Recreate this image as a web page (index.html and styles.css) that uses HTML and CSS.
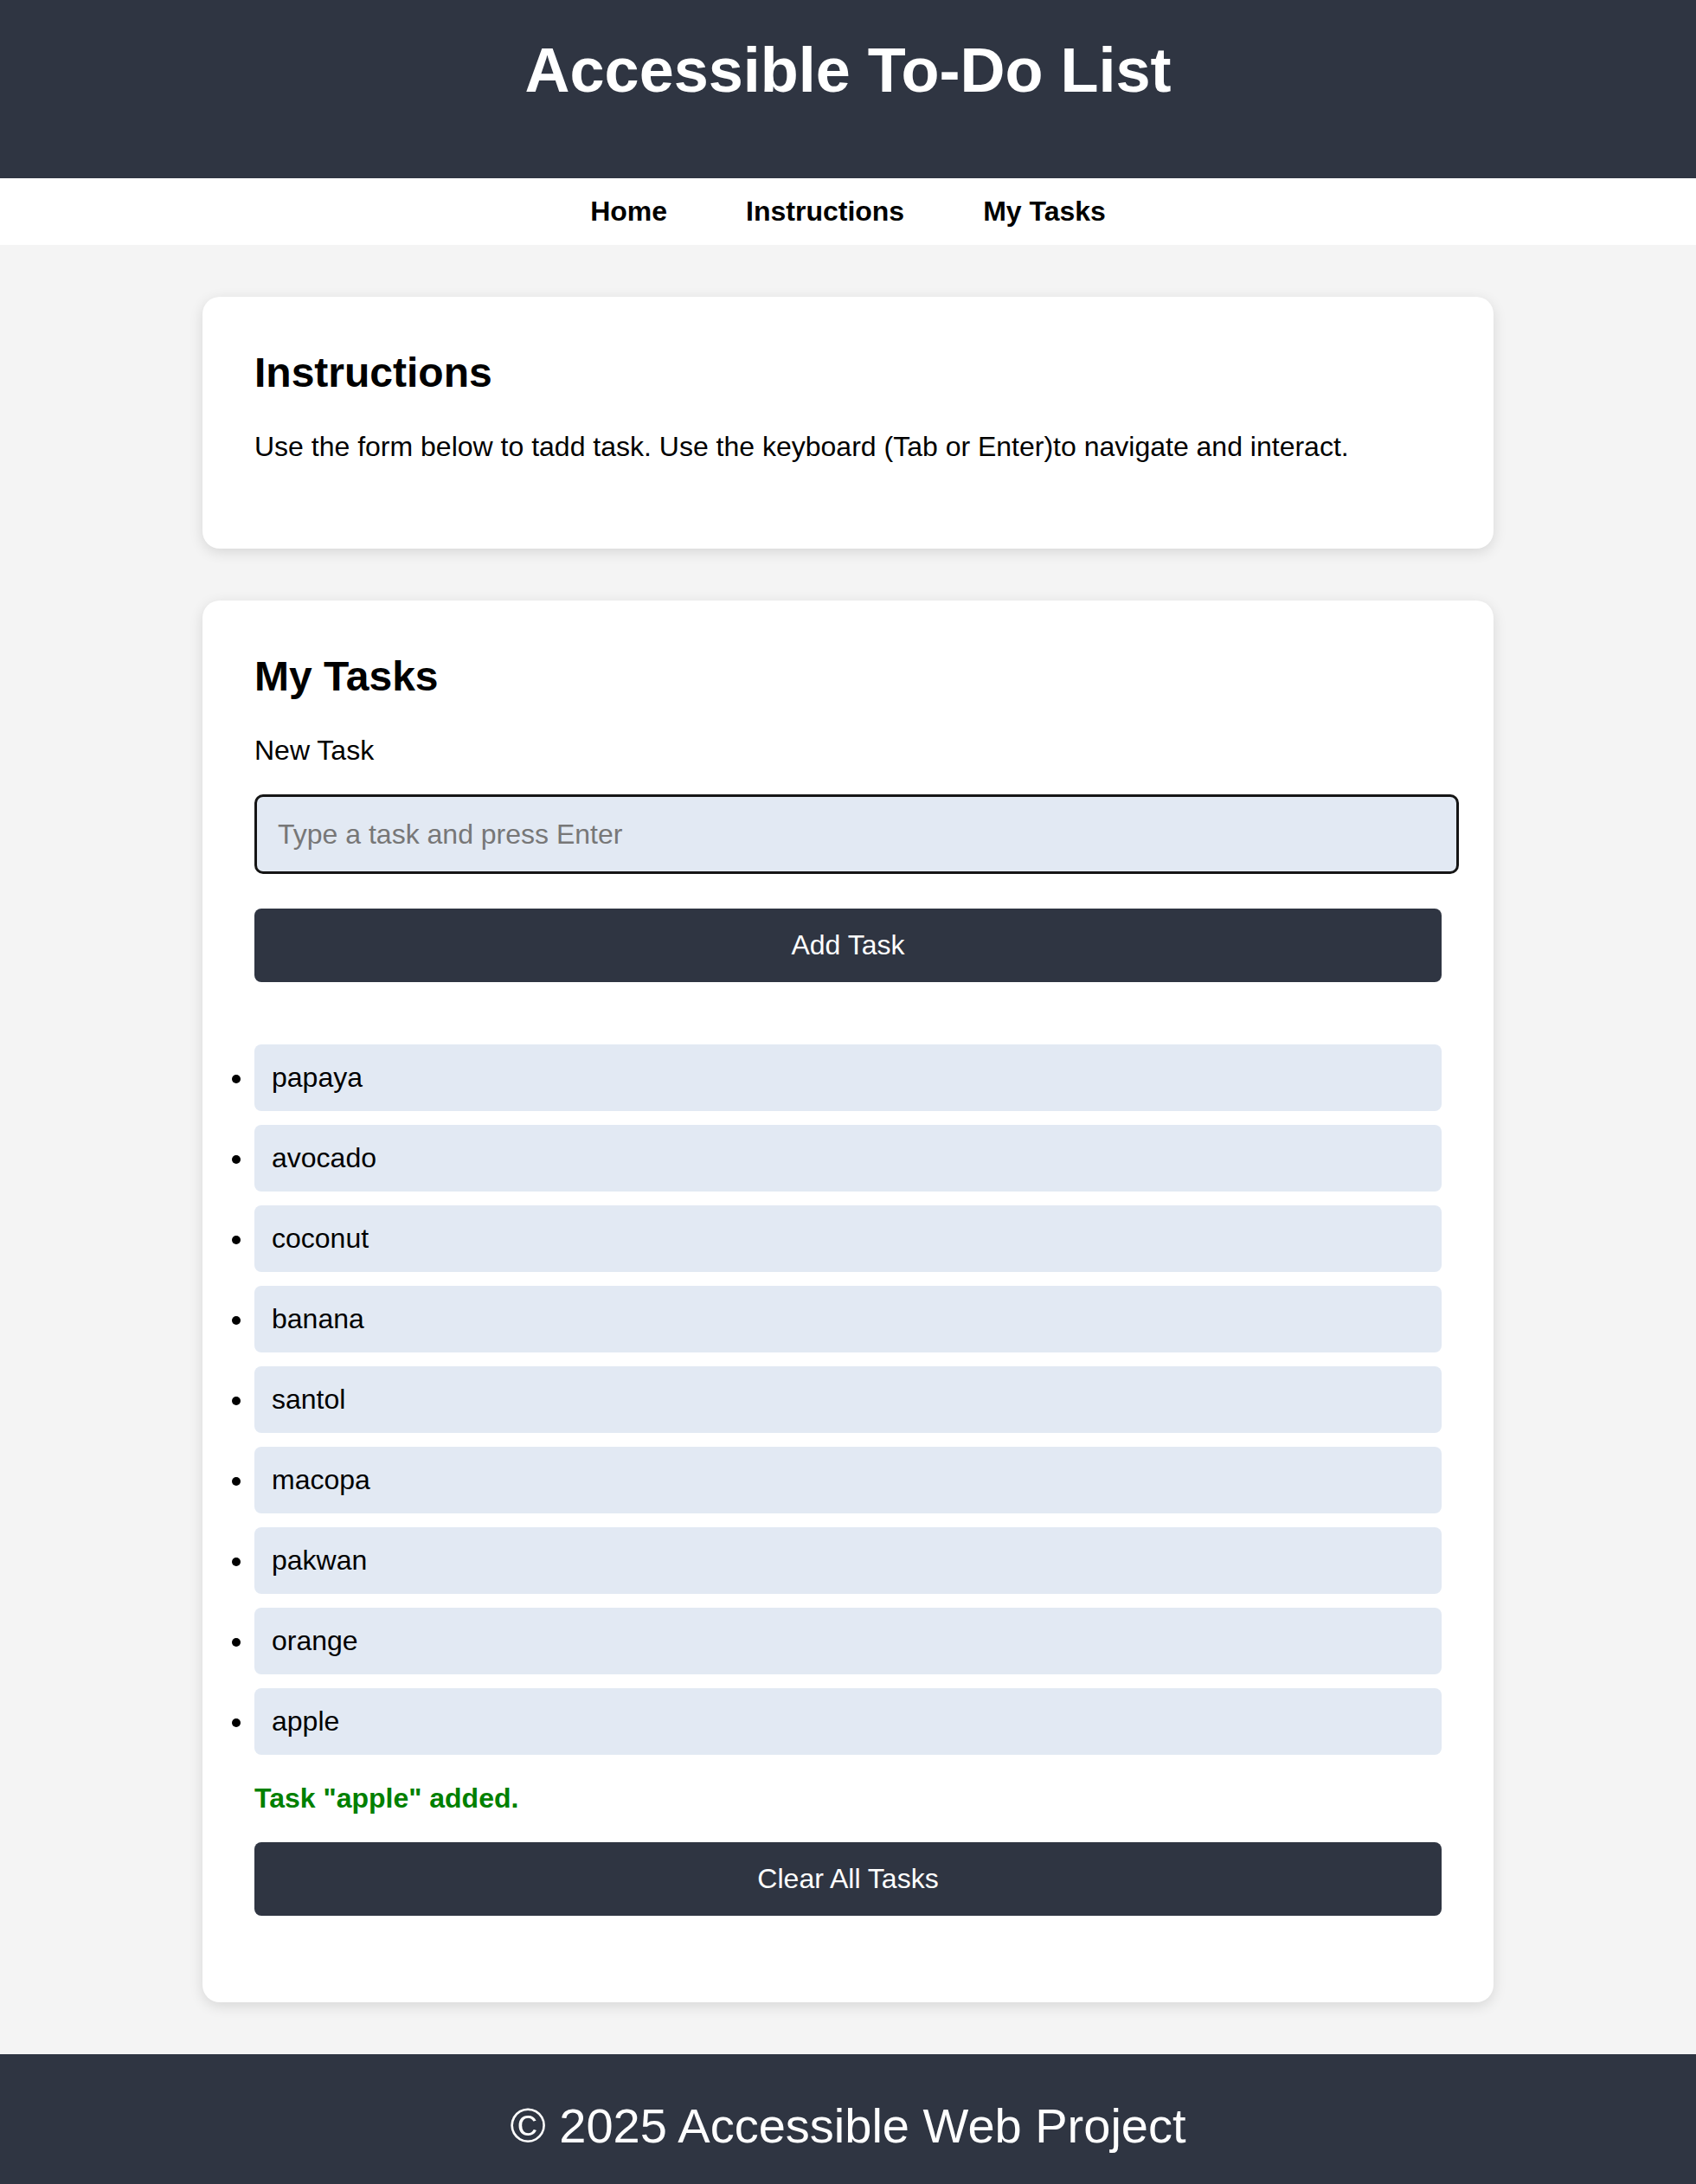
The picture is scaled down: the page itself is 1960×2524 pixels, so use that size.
FILE: index.html
```html
<!DOCTYPE html>
<html lang="en">
<head>
<meta charset="UTF-8">
<title>Accessible To-Do List</title>
<link rel="stylesheet" href="styles.css">
</head>
<body>
<header class="site-header">
  <h1 class="site-title">Accessible To-Do List</h1>
</header>
<nav class="site-nav">
  <a href="#home" class="nav-link">Home</a>
  <a href="#instructions" class="nav-link">Instructions</a>
  <a href="#tasks" class="nav-link">My Tasks</a>
</nav>
<main class="content">
  <section class="card" id="instructions">
    <h2 class="card-title">Instructions</h2>
    <p class="card-text">Use the form below to tadd task. Use the keyboard (Tab or Enter)to navigate and interact.</p>
  </section>
  <section class="card" id="tasks">
    <h2 class="card-title">My Tasks</h2>
    <form class="task-form">
      <label for="task-input" class="task-label">New Task</label>
      <input id="task-input" class="task-input" type="text" placeholder="Type a task and press Enter">
      <button type="button" class="btn btn-add">Add Task</button>
    </form>
    <ul class="task-list">
      <li class="task-item">papaya</li>
      <li class="task-item">avocado</li>
      <li class="task-item">coconut</li>
      <li class="task-item">banana</li>
      <li class="task-item">santol</li>
      <li class="task-item">macopa</li>
      <li class="task-item">pakwan</li>
      <li class="task-item">orange</li>
      <li class="task-item">apple</li>
    </ul>
    <p class="status">Task "apple" added.</p>
    <button type="button" class="btn btn-clear">Clear All Tasks</button>
  </section>
</main>
<footer class="site-footer">
  <p class="footer-text">&copy; 2025 Accessible Web Project</p>
</footer>
</body>
</html>
```

FILE: styles.css
```css
* {
  box-sizing: border-box;
}

html, body {
  margin: 0;
  padding: 0;
}

body {
  background: #f4f4f4;
  font-family: "Liberation Sans", Arial, sans-serif;
  font-size: 32px;
  color: #000;
}

.site-header {
  background: #2f3542;
  color: #fff;
  text-align: center;
  padding: 40px 0 0;
  height: 206px;
}

.site-title {
  margin: 0;
  font-size: 72px;
  font-weight: bold;
  line-height: normal;
}

.site-nav {
  background: #fff;
  display: flex;
  justify-content: center;
  gap: 91px;
  padding: 20px 0;
  height: 77px;
}

.nav-link {
  color: #000;
  font-weight: bold;
  text-decoration: none;
  font-size: 32px;
  line-height: normal;
}

.content {
  display: flex;
  flex-direction: column;
  align-items: center;
  gap: 60px;
  padding: 60px 0;
}

.card {
  width: 1492px;
  background: #fff;
  border-radius: 20px;
  box-shadow: 0 4px 16px rgba(0, 0, 0, 0.12);
  padding: 60px 60px 60px;
}

.card-title {
  margin: 0 0 40px;
  font-size: 48px;
  font-weight: bold;
  line-height: normal;
}

.card-text {
  margin: 0 0 39px;
  line-height: normal;
}

.task-form {
  display: flex;
  flex-direction: column;
  align-items: flex-start;
}

.task-label {
  display: block;
  margin-bottom: 32px;
  line-height: normal;
}

.task-input {
  width: calc(100% + 20px);
  height: 92px;
  padding: 0 24px;
  border: 3px solid #151515;
  border-radius: 10px;
  background: #e2e9f3;
  font-family: inherit;
  font-size: 32px;
  color: #000;
}

.task-input::placeholder {
  color: #777;
}

.btn {
  width: 100%;
  height: 85px;
  border: none;
  border-radius: 8px;
  background: #2f3542;
  color: #fff;
  font-family: inherit;
  font-size: 32px;
  line-height: normal;
  padding: 0;
}

.btn-add {
  margin: 40px 0 0;
}

.task-list {
  list-style: disc outside;
  margin: 72px 0 32px;
  padding: 0;
}

.task-item {
  background: #e2e9f3;
  border-radius: 8px;
  padding: 20px;
  margin-bottom: 16px;
  line-height: normal;
}

.task-item:last-child {
  margin-bottom: 0;
}

.status {
  margin: 0 0 32px;
  color: #008000;
  font-weight: bold;
  line-height: normal;
}

.btn-clear {
  display: block;
  margin-bottom: 40px;
}

.site-footer {
  background: #2f3542;
  color: #fff;
  text-align: center;
  padding: 50px 0 37px;
}

.footer-text {
  margin: 0;
  font-size: 56px;
  line-height: normal;
}
```
